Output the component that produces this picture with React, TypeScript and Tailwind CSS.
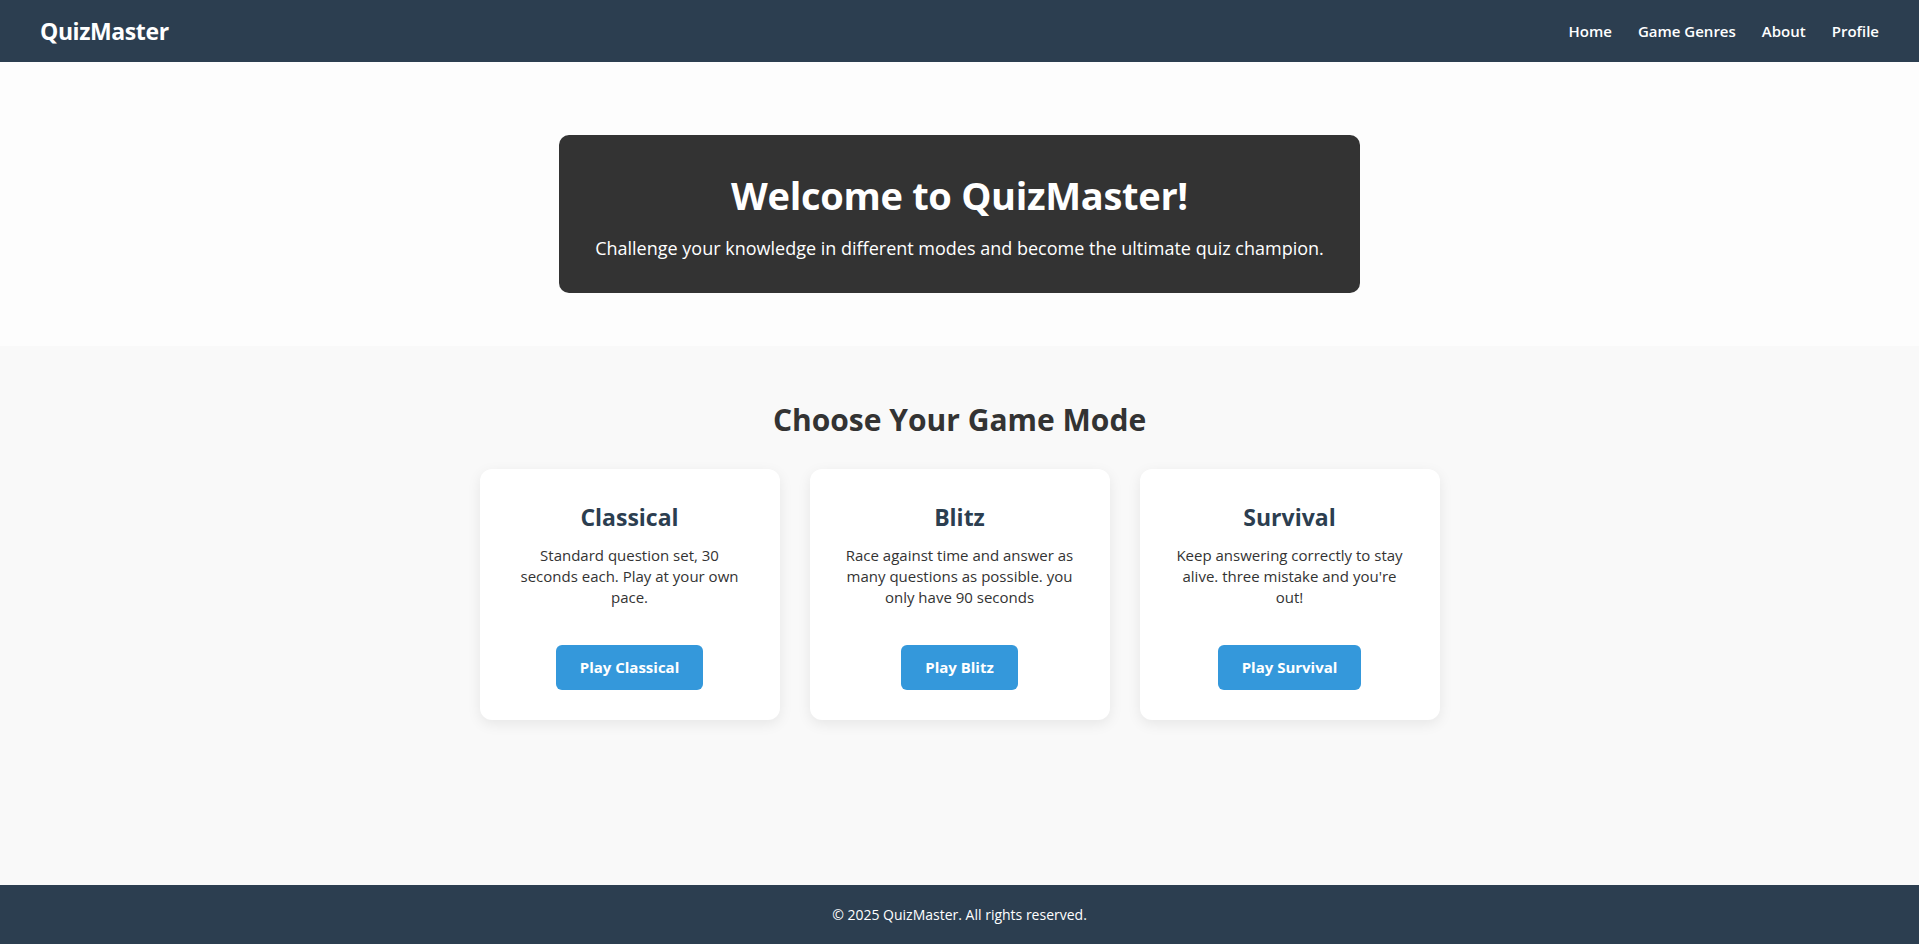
const MODES = [
  {
    title: "Classical",
    desc: "Standard question set, 30 seconds each. Play at your own pace.",
    cta: "Play Classical",
  },
  {
    title: "Blitz",
    desc: "Race against time and answer as many questions as possible. you only have 90 seconds",
    cta: "Play Blitz",
  },
  {
    title: "Survival",
    desc: "Keep answering correctly to stay alive. three mistake and you're out!",
    cta: "Play Survival",
  },
];

const FONT = "font-['Segoe_UI','Open_Sans',sans-serif]";

export default function App() {
  return (
    <div className={`min-h-screen flex flex-col bg-[#f9f9f9] text-[#333] ${FONT}`}>
      {/* ── HEADER ── */}
      <header className="h-[62px] bg-[#2c3e50] px-10 flex items-center justify-between text-white">
        <div className="text-[23px] font-bold tracking-[-0.4px]">QuizMaster</div>
        <nav className="flex items-center gap-[26px] text-[15px] font-semibold">
          <a href="#">Home</a>
          <a href="#">Game Genres</a>
          <a href="#">About</a>
          <a href="#">Profile</a>
        </nav>
      </header>

      {/* ── HERO ── */}
      <section className="bg-[#fdfdfd] pt-[73px] pb-[53px] flex justify-center">
        <div className="w-[801px] h-[158px] bg-[#333] rounded-[10px] text-white text-center pt-[34px]">
          <h1 className="text-[38px] font-bold leading-[52px] tracking-[-0.3px] mb-[14px]">Welcome to QuizMaster!</h1>
          <p className="text-[18px] leading-[26px]">
            Challenge your knowledge in different modes and become the ultimate quiz champion.
          </p>
        </div>
      </section>

      {/* ── GAME MODES ── */}
      <main className="flex-1 pt-[52px] pb-[40px]">
        <h2 className="text-center text-[30px] font-bold leading-[44px] text-[#333] mb-[27px]">Choose Your Game Mode</h2>
        <div className="flex justify-center gap-[30px]">
          {MODES.map((m) => (
            <div
              key={m.title}
              className="w-[300px] h-[251px] bg-white rounded-[12px] shadow-[0_4px_14px_rgba(0,0,0,0.08)] px-[30px] pt-[30px] flex flex-col items-center text-center"
            >
              <h3 className="text-[23px] font-bold leading-[36px] text-[#2c3e50] mb-[10px]">{m.title}</h3>
              <p className="text-[15px] leading-[21px] text-[#333] px-[4px]">{m.desc}</p>
              <button className="mt-auto mb-[30px] h-[45px] px-[24px] rounded-[6px] bg-[#3498db] text-white text-[15px] font-bold">
                {m.cta}
              </button>
            </div>
          ))}
        </div>
      </main>

      {/* ── FOOTER ── */}
      <footer className="h-[59px] bg-[#2c3e50] text-white text-[14px] flex items-center justify-center">
        © 2025 QuizMaster. All rights reserved.
      </footer>
    </div>
  );
}
